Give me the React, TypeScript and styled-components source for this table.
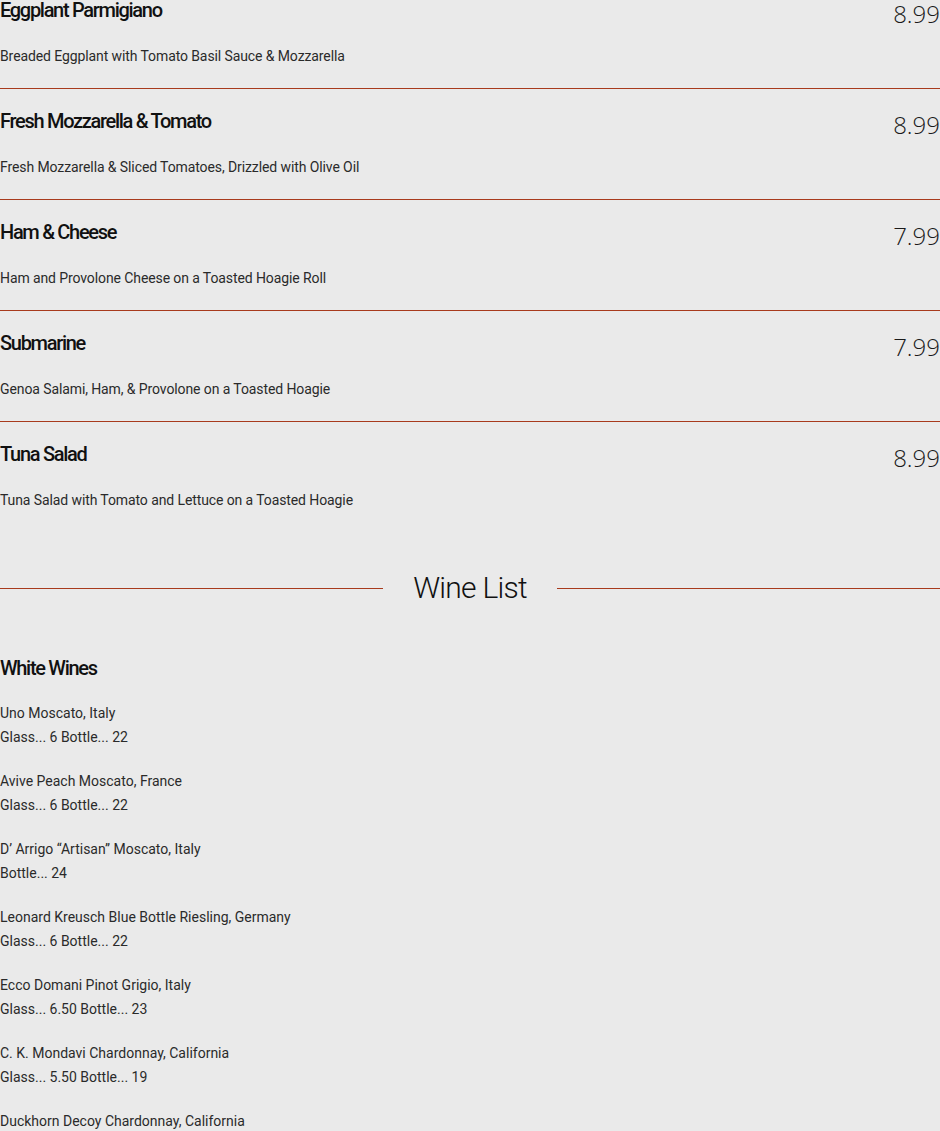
import React from 'react';
import styled, { createGlobalStyle } from 'styled-components';

const GlobalStyle = createGlobalStyle`
  html, body {
    margin: 0;
    padding: 0;
    background: #eaeaea;
  }
  body {
    font-family: Roboto, "Liberation Sans", sans-serif;
    color: #222;
    overflow: hidden;
  }
`;

const Page = styled.div`
  width: 940px;
  margin-top: -22px;
`;

const ItemList = styled.div`
  display: flex;
  flex-direction: column;
`;

const Item = styled.div`
  display: flex;
  justify-content: space-between;
  align-items: flex-start;
  padding: 19px 0 22px;

  & + & {
    border-top: 1px solid #a83b1d;
  }
`;

const ItemText = styled.div`
  display: flex;
  flex-direction: column;
  gap: 23px;
`;

const ItemName = styled.h3`
  margin: 0;
  font-size: 20px;
  line-height: 26px;
  font-weight: 500;
  letter-spacing: -1.3px;
  color: #111;
`;

const ItemDesc = styled.p`
  margin: 0;
  font-size: 14px;
  line-height: 20px;
  font-weight: 400;
  letter-spacing: -0.1px;
  color: #2a2a2a;
`;

const Price = styled.span`
  margin-top: 1px;
  font-family: "Open Sans", sans-serif;
  font-weight: 300;
  font-size: 24px;
  line-height: 32px;
  color: #1a1a1a;
`;

const SectionHeading = styled.div`
  display: flex;
  align-items: center;
  gap: 30px;
  margin-top: 38px;

  &::before,
  &::after {
    content: '';
    flex: 1;
    height: 1px;
    background: #a83b1d;
  }
`;

const SectionTitle = styled.h2`
  margin: 0;
  font-size: 30px;
  line-height: 36px;
  font-weight: 300;
  letter-spacing: -0.75px;
  color: #111;
`;

const Category = styled.h3`
  margin: 49px 0 20px;
  font-size: 20px;
  line-height: 26px;
  font-weight: 500;
  letter-spacing: -1.3px;
  color: #111;
`;

const WineList = styled.div`
  display: flex;
  flex-direction: column;
  gap: 20px;
`;

const Wine = styled.div`
  font-size: 14px;
  line-height: 24px;
  letter-spacing: 0;
  color: #2a2a2a;
`;

const items = [
  { name: 'Eggplant Parmigiano', desc: 'Breaded Eggplant with Tomato Basil Sauce & Mozzarella', price: '8.99' },
  { name: 'Fresh Mozzarella & Tomato', desc: 'Fresh Mozzarella & Sliced Tomatoes, Drizzled with Olive Oil', price: '8.99' },
  { name: 'Ham & Cheese', desc: 'Ham and Provolone Cheese on a Toasted Hoagie Roll', price: '7.99' },
  { name: 'Submarine', desc: 'Genoa Salami, Ham, & Provolone on a Toasted Hoagie', price: '7.99' },
  { name: 'Tuna Salad', desc: 'Tuna Salad with Tomato and Lettuce on a Toasted Hoagie', price: '8.99' },
];

const wines = [
  { name: 'Uno Moscato, Italy', price: 'Glass... 6 Bottle... 22' },
  { name: 'Avive Peach Moscato, France', price: 'Glass... 6 Bottle... 22' },
  { name: 'D’ Arrigo “Artisan” Moscato, Italy', price: 'Bottle... 24' },
  { name: 'Leonard Kreusch Blue Bottle Riesling, Germany', price: 'Glass... 6 Bottle... 22' },
  { name: 'Ecco Domani Pinot Grigio, Italy', price: 'Glass... 6.50 Bottle... 23' },
  { name: 'C. K. Mondavi Chardonnay, California', price: 'Glass... 5.50 Bottle... 19' },
  { name: 'Duckhorn Decoy Chardonnay, California', price: 'Glass... 9 Bottle... 34' },
];

export default function App() {
  return (
    <Page>
      <GlobalStyle />
      <ItemList>
        {items.map((item) => (
          <Item key={item.name}>
            <ItemText>
              <ItemName>{item.name}</ItemName>
              <ItemDesc>{item.desc}</ItemDesc>
            </ItemText>
            <Price>{item.price}</Price>
          </Item>
        ))}
      </ItemList>

      <SectionHeading>
        <SectionTitle>Wine List</SectionTitle>
      </SectionHeading>

      <Category>White Wines</Category>
      <WineList>
        {wines.map((wine) => (
          <Wine key={wine.name}>
            {wine.name}
            <br />
            {wine.price}
          </Wine>
        ))}
      </WineList>
    </Page>
  );
}
